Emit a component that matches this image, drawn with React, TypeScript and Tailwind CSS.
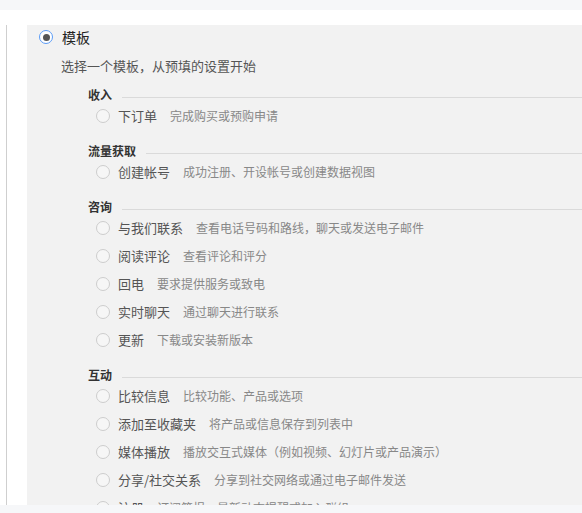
const sections = [
  {
    title: "收入",
    items: [["下订单", "完成购买或预购申请"]],
  },
  {
    title: "流量获取",
    items: [["创建帐号", "成功注册、开设帐号或创建数据视图"]],
  },
  {
    title: "咨询",
    items: [
      ["与我们联系", "查看电话号码和路线，聊天或发送电子邮件"],
      ["阅读评论", "查看评论和评分"],
      ["回电", "要求提供服务或致电"],
      ["实时聊天", "通过聊天进行联系"],
      ["更新", "下载或安装新版本"],
    ],
  },
  {
    title: "互动",
    items: [
      ["比较信息", "比较功能、产品或选项"],
      ["添加至收藏夹", "将产品或信息保存到列表中"],
      ["媒体播放", "播放交互式媒体（例如视频、幻灯片或产品演示）"],
      ["分享/社交关系", "分享到社交网络或通过电子邮件发送"],
      ["注册", "订阅简报、最新动态提醒或加入群组"],
    ],
  },
];

function Radio({ checked }: { checked?: boolean }) {
  if (checked) {
    return (
      <span className="flex h-[14px] w-[14px] shrink-0 items-center justify-center rounded-full border border-[#5b9cf6] bg-white">
        <span className="h-[7px] w-[7px] rounded-full bg-[#555]" />
      </span>
    );
  }
  return <span className="h-[14px] w-[14px] shrink-0 rounded-full border border-[#cdcdcd] bg-[#f6f6f6]" />;
}

export default function App() {
  return (
    <div
      className="h-[513px] overflow-hidden bg-[#f6f7f9] pt-[10px]"
      style={{ fontFamily: '"Noto Sans CJK SC", "Noto Sans", sans-serif' }}
    >
      <div className="flex h-[495px] overflow-hidden bg-white pt-[15px]">
        <div className="ml-[6px] w-[21px] shrink-0 border-l border-[#cfcfcf]" />
        <div className="flex-1 bg-[#f2f2f2]">
          <div className="flex h-6 items-center gap-[9px] pl-[12px]">
            <Radio checked />
            <span className="text-[14px] text-[#222]">模板</span>
          </div>
          <p className="mt-[7px] pl-[34px] text-[13px] leading-5 text-[#555]">选择一个模板，从预填的设置开始</p>

          {sections.map((s, i) => (
            <div key={s.title} className={i === 0 ? "mt-[12px]" : "mt-[14px]"}>
              <div className="flex pl-[61px]">
                <span className="text-[12px] font-bold leading-[14px] text-[#333]">{s.title}</span>
                <span className="ml-[10px] mt-[9px] h-px flex-1 bg-[#dadada]" />
              </div>
              {s.items.map(([label, desc]) => (
                <div key={label} className="flex h-[28px] items-center pl-[69px]">
                  <Radio />
                  <span className="ml-[8px] whitespace-nowrap text-[13px] text-[#555]">{label}</span>
                  <span className="ml-[13px] whitespace-nowrap text-[12px] text-[#888]">{desc}</span>
                </div>
              ))}
            </div>
          ))}
        </div>
      </div>
    </div>
  );
}
